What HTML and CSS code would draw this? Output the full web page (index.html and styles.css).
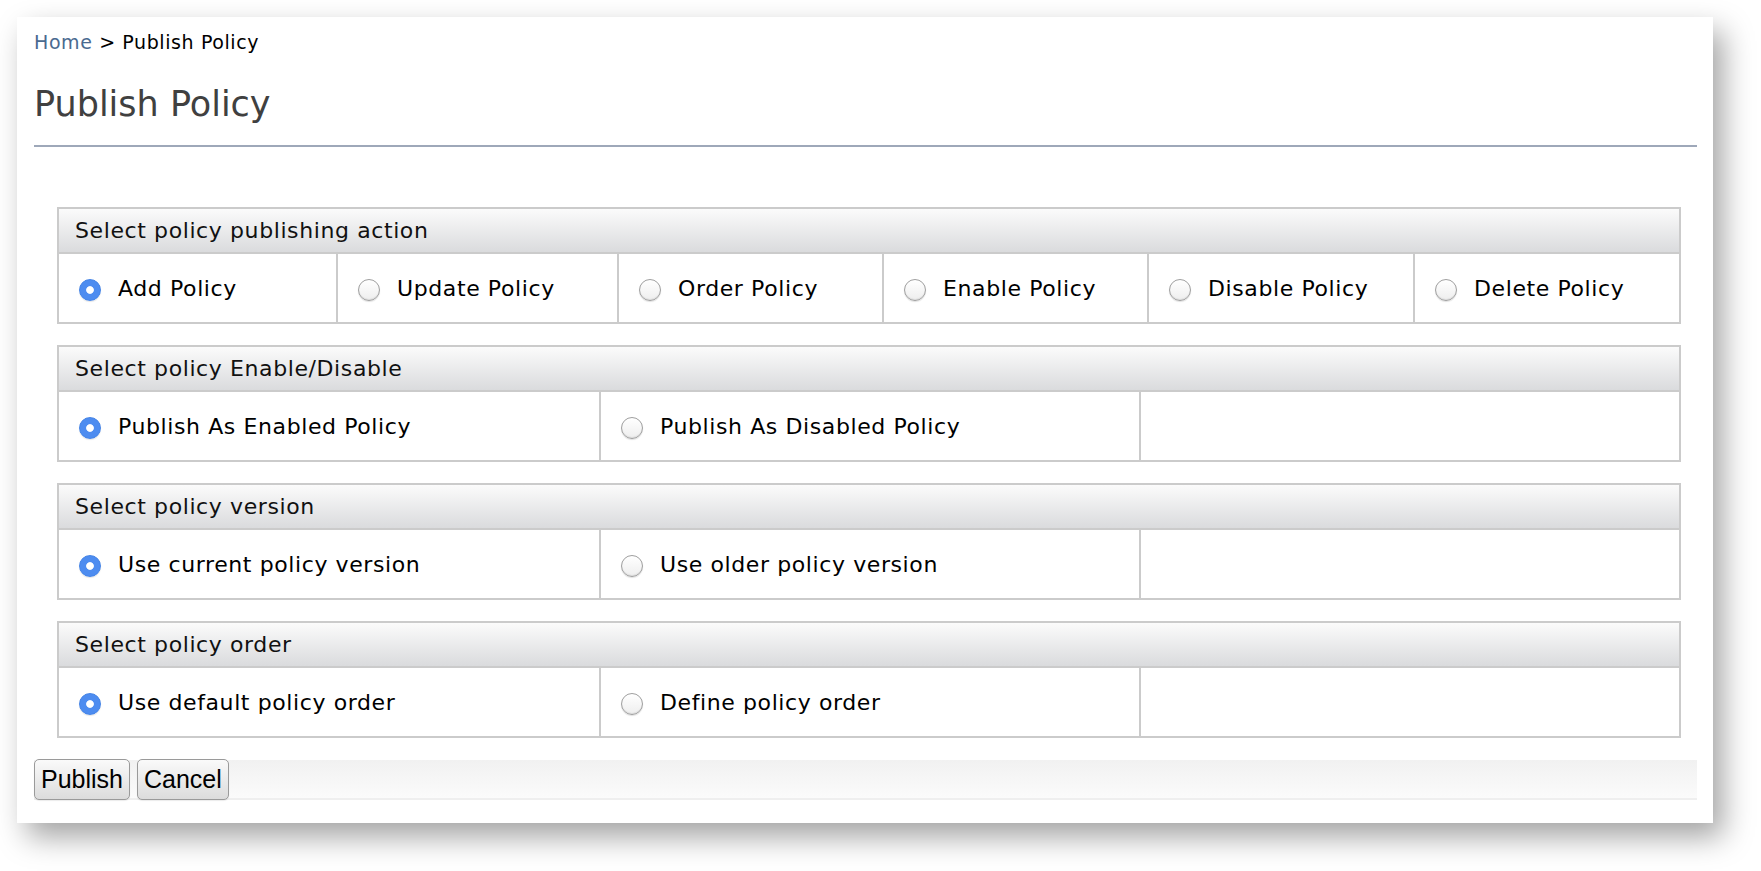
FILE: index.html
```html
<!DOCTYPE html>
<html lang="en">
<head>
<meta charset="utf-8">
<title>Publish Policy</title>
<link rel="stylesheet" href="styles.css">
</head>
<body>
<div class="page">
<div class="frame">
  <div class="crumbs"><a class="crumb-link" href="#">Home</a> &gt; Publish Policy</div>
  <h2 class="title">Publish Policy</h2>
  <div class="rule"></div>

  <div class="sections">
    <section class="panel">
      <div class="panel-head">Select policy publishing action</div>
      <div class="panel-row row-actions">
        <label class="cell"><input class="radio" type="radio" name="action" checked><span>Add Policy</span></label>
        <label class="cell"><input class="radio" type="radio" name="action"><span>Update Policy</span></label>
        <label class="cell"><input class="radio" type="radio" name="action"><span>Order Policy</span></label>
        <label class="cell"><input class="radio" type="radio" name="action"><span>Enable Policy</span></label>
        <label class="cell"><input class="radio" type="radio" name="action"><span>Disable Policy</span></label>
        <label class="cell"><input class="radio" type="radio" name="action"><span>Delete Policy</span></label>
      </div>
    </section>

    <section class="panel">
      <div class="panel-head">Select policy Enable/Disable</div>
      <div class="panel-row row-three">
        <label class="cell"><input class="radio" type="radio" name="enable" checked><span>Publish As Enabled Policy</span></label>
        <label class="cell"><input class="radio" type="radio" name="enable"><span>Publish As Disabled Policy</span></label>
        <div class="cell"></div>
      </div>
    </section>

    <section class="panel">
      <div class="panel-head">Select policy version</div>
      <div class="panel-row row-three">
        <label class="cell"><input class="radio" type="radio" name="version" checked><span>Use current policy version</span></label>
        <label class="cell"><input class="radio" type="radio" name="version"><span>Use older policy version</span></label>
        <div class="cell"></div>
      </div>
    </section>

    <section class="panel">
      <div class="panel-head">Select policy order</div>
      <div class="panel-row row-three">
        <label class="cell"><input class="radio" type="radio" name="order" checked><span>Use default policy order</span></label>
        <label class="cell"><input class="radio" type="radio" name="order"><span>Define policy order</span></label>
        <div class="cell"></div>
      </div>
    </section>
  </div>

  <div class="button-bar">
    <button class="btn" type="button">Publish</button>
    <button class="btn" type="button">Cancel</button>
  </div>
</div>
</div>
</body>
</html>
```
FILE: styles.css
```css
html, body {
  margin: 0;
  padding: 0;
  background: #ffffff;
}

body {
  font-family: "DejaVu Sans", "Liberation Sans", sans-serif;
  color: #111;
}

.page {
  padding: 17px 0 48px 17px;
}

.frame {
  width: 1696px;
  box-sizing: border-box;
  padding: 15px 16px 23px 17px;
  background: #ffffff;
  box-shadow: 10px 14px 28px rgba(0, 0, 0, 0.36);
}

.crumbs {
  font-size: 19px;
  line-height: 21px;
  letter-spacing: 0.6px;
  color: #000;
}

.crumb-link {
  color: #4a6a90;
  text-decoration: none;
}

.title {
  margin: 31px 0 0;
  font-size: 35px;
  line-height: 41px;
  font-weight: normal;
  color: #404040;
}

.rule {
  margin-top: 20px;
  height: 2px;
  background: #9ea8b9;
}

.sections {
  margin: 60px 16px 0 23px;
  display: flex;
  flex-direction: column;
  gap: 21px;
}

.panel {
  border: 2px solid #cbcbcb;
}

.panel-head {
  height: 43px;
  display: flex;
  align-items: center;
  padding-left: 16px;
  border-bottom: 2px solid #cbcbcb;
  background: linear-gradient(#fbfbfb, #dadbdd);
  font-size: 22px;
  letter-spacing: 0.6px;
  color: #111;
}

.panel-row {
  display: grid;
  height: 68px;
}

.row-actions {
  grid-template-columns: 277px 281px 265px 265px 266px 266px;
}

.row-three {
  grid-template-columns: repeat(3, 1fr);
}

.cell {
  display: flex;
  align-items: center;
  gap: 17px;
  padding-left: 20px;
  box-sizing: border-box;
  font-size: 22px;
  letter-spacing: 0.6px;
  color: #000;
  white-space: nowrap;
}

.cell + .cell {
  border-left: 2px solid #cbcbcb;
}

.radio {
  -webkit-appearance: none;
  appearance: none;
  flex: none;
  box-sizing: border-box;
  width: 22px;
  height: 22px;
  margin: 3px 0 0 0;
  border-radius: 50%;
  border: 1px solid #9f9f9f;
  background: linear-gradient(#ffffff, #eeeeee);
  box-shadow: inset 0 -1px 1px rgba(0, 0, 0, 0.07), 0 1px 1px rgba(0, 0, 0, 0.12);
}

.radio:checked {
  border-color: #4383e6;
  background: radial-gradient(circle, #ffffff 0, #ffffff 3.4px, #4d8cf0 4.3px);
  box-shadow: 0 1px 1px rgba(0, 0, 0, 0.1);
}

.button-bar {
  margin-top: 22px;
  height: 40px;
  box-sizing: border-box;
  display: flex;
  align-items: flex-start;
  gap: 7px;
  background: linear-gradient(#f1f1f1, #fbfbfb);
  border-bottom: 2px solid #efefef;
}

.btn {
  height: 41px;
  margin: -1px 0 0 0;
  padding: 0 6px;
  font-family: "Liberation Sans", Arial, sans-serif;
  font-size: 25px;
  color: #000;
  border: 1px solid #9a9a9a;
  border-radius: 5px;
  background: linear-gradient(#fafafa, #dcdcdc);
  box-shadow: 0 1px 1px rgba(0, 0, 0, 0.08);
}
```
